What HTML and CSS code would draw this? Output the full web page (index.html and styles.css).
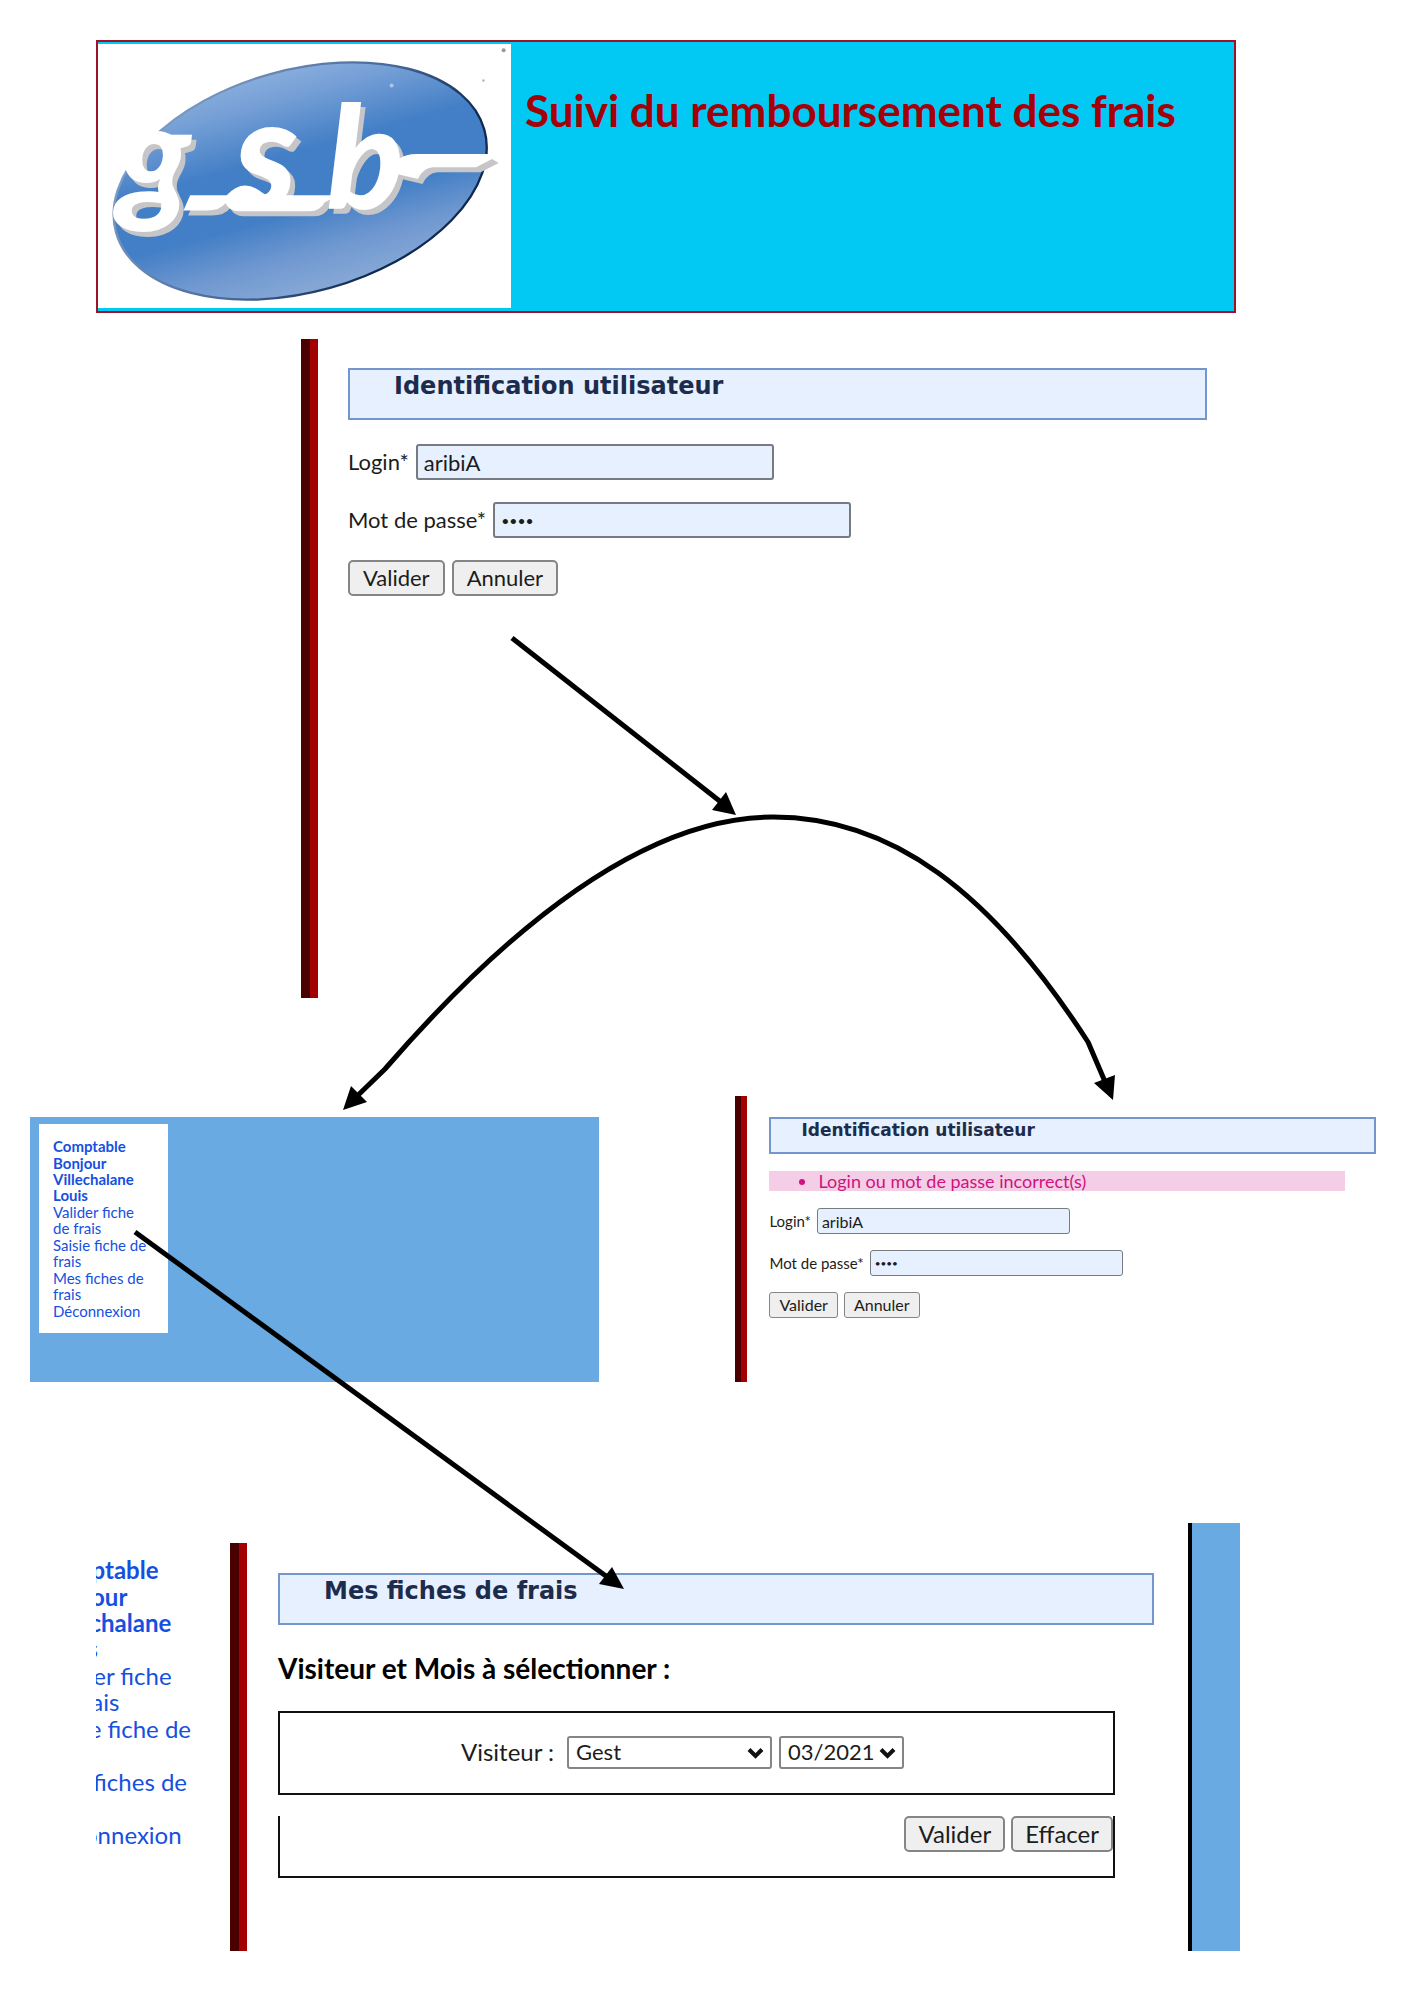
FILE: index.html
```html
<!DOCTYPE html>
<html lang="fr">
<head>
<meta charset="utf-8">
<title>Suivi du remboursement des frais</title>
<link rel="stylesheet" href="styles.css">
</head>
<body>
<div class="page">
  <header class="banner">
    <svg class="logo" viewBox="54 69 1240 794" role="img" aria-label="Logo gsb">
      <defs>
        <linearGradient id="oval" x1="0" y1="120" x2="0" y2="842" gradientUnits="userSpaceOnUse">
          <stop offset="0" stop-color="#8db1de"/>
          <stop offset="0.15" stop-color="#759fd6"/>
          <stop offset="0.38" stop-color="#437fc6"/>
          <stop offset="0.62" stop-color="#437fc6"/>
          <stop offset="0.8" stop-color="#7098d0"/>
          <stop offset="1" stop-color="#8cacd8"/>
        </linearGradient>
        <linearGradient id="edge" x1="300" y1="200" x2="800" y2="800" gradientUnits="userSpaceOnUse">
          <stop offset="0" stop-color="#7f9cc2"/>
          <stop offset="0.6" stop-color="#47699c"/>
          <stop offset="1" stop-color="#10294f"/>
        </linearGradient>
        <g id="lettering">
          <text class="logo-letter" x="112" y="556">g</text>
          <text class="logo-letter logo-letter-tall" x="462" y="566">s</text>
          <text class="logo-letter" x="740" y="566">b</text>
          <path d="M330 524H440Q490 470 545 515L560 524H780L735 545Q720 572 690 572H475Q450 572 436 548Q420 570 380 570H310Z"/>
          <path d="M930 455Q950 400 1010 400H1224L1244 412L1190 440H1060Q1030 442 1015 475Z"/>
        </g>
      </defs>
      <ellipse cx="661" cy="481" rx="575" ry="334" transform="rotate(-15.6 661 481)" fill="url(#oval)" stroke="url(#edge)" stroke-width="7"/>
      <use href="#lettering" x="14" y="15" fill="#c6c6c8"/>
      <use href="#lettering" fill="#fff"/>
      <circle cx="1273" cy="88" r="6" fill="#999"/>
      <circle cx="1212" cy="179" r="4" fill="#bbb"/>
      <circle cx="936" cy="194" r="6" fill="#a9c8e8"/>
    </svg>
    <h1 class="banner-title">Suivi du remboursement des frais</h1>
  </header>

  <section class="frame login">
    <h2 class="heading">Identification utilisateur</h2>
    <form class="form">
      <div class="row"><label for="login">Login*</label><input class="field" id="login" type="text" value="aribiA"></div>
      <div class="row"><label for="pass">Mot de passe*</label><input class="field" id="pass" type="password" value="aaaa"></div>
      <div class="row"><button class="btn" type="button">Valider</button><button class="btn" type="button">Annuler</button></div>
    </form>
  </section>

  <div class="results">
    <section class="home">
      <ul class="menu">
        <li><strong>Comptable</strong></li>
        <li><strong>Bonjour<br>Villechalane<br>Louis</strong></li>
        <li><a href="#valider">Valider fiche<br>de frais</a></li>
        <li><a href="#saisie">Saisie fiche de<br>frais</a></li>
        <li><a href="#fiches">Mes fiches de<br>frais</a></li>
        <li><a href="#sortie">Déconnexion</a></li>
      </ul>
    </section>
    <section class="frame retry">
      <h2 class="heading">Identification utilisateur</h2>
      <ul class="error"><li>Login ou mot de passe incorrect(s)</li></ul>
      <form class="form">
        <div class="row"><label for="login2">Login*</label><input class="field" id="login2" type="text" value="aribiA"></div>
        <div class="row"><label for="pass2">Mot de passe*</label><input class="field" id="pass2" type="password" value="aaaa"></div>
        <div class="row"><button class="btn" type="button">Valider</button><button class="btn" type="button">Annuler</button></div>
      </form>
    </section>
  </div>

  <div class="sheets">
    <nav class="side">
      <ul class="menu menu-large">
        <li><strong>Comptable</strong></li>
        <li><strong>Bonjour<br>Villechalane<br>Louis</strong></li>
        <li><a href="#valider">Valider fiche<br>de frais</a></li>
        <li><a href="#saisie">Saisie fiche de<br>frais</a></li>
        <li><a href="#fiches">Mes fiches de<br>frais</a></li>
        <li><a href="#sortie">Déconnexion</a></li>
      </ul>
    </nav>
    <section class="frame fiches">
      <h2 class="heading">Mes fiches de frais</h2>
      <h3 class="subheading">Visiteur et Mois à sélectionner :</h3>
      <form class="selection">
        <div class="criteria">
          <label for="visiteur">Visiteur :</label>
          <span class="select select-wide">
            <select id="visiteur"><option>Gest</option></select>
            <svg class="chevron" viewBox="0 0 17 12"><path d="M2 2.500L8.500 9L15 2.500"/></svg>
          </span>
          <span class="select">
            <select id="mois" aria-label="Mois"><option>03/2021</option></select>
            <svg class="chevron" viewBox="0 0 17 12"><path d="M2 2.500L8.500 9L15 2.500"/></svg>
          </span>
        </div>
        <div class="actions"><button class="btn" type="button">Valider</button><button class="btn" type="button">Effacer</button></div>
      </form>
    </section>
    <div class="rail"></div>
  </div>

  <svg class="arrows" viewBox="0 0 1413 2000" preserveAspectRatio="none" aria-hidden="true">
    <path class="line" d="M512 638L726 806"/>
    <path d="M736 815L726 792L712 810Z"/>
    <path class="line" d="M352 1101L385 1069C510 925 645 817 773 817C890 817 990 890 1088 1042L1106 1084"/>
    <path d="M343 1110L351 1086L367 1102Z"/>
    <path d="M1113 1100L1094 1083L1115 1075Z"/>
    <path class="line" d="M135 1232L610 1579"/>
    <path d="M624 1589L612 1567L599 1584Z"/>
  </svg>
</div>
</body>
</html>
```
FILE: styles.css
```css
* { box-sizing: border-box; }

body {
  margin: 0;
  background: #fff;
  color: #1c1c1c;
  font-family: Lato, "Liberation Sans", sans-serif;
  font-size: 22px;
  line-height: 28px;
}

h1, h2, h3, ul { margin: 0; padding: 0; }
ul { list-style: none; }

.page {
  position: relative;
  padding: 40px 0 49px;
}

.banner {
  display: flex;
  gap: 14px;
  margin: 0 177px 26px 96px;
  padding: 2px 0 3px;
  border: 2px solid #9c1428;
  background: #02c9f3;
}
.logo {
  flex: none;
  width: 413px;
  height: 264px;
  background: #fff;
}
.logo-letter {
  font-family: Lato, sans-serif;
  font-size: 430px;
  font-style: italic;
  font-weight: 900;
}
.logo-letter-tall { font-size: 470px; }
.banner-title {
  padding-top: 40px;
  color: #a40008;
  font-size: 44px;
  line-height: 52px;
  font-weight: 700;
}

/* Framed page excerpts with the two-tone vertical bar */
.frame {
  border-left: 9px solid #4a0000;
  box-shadow: inset 8px 0 #a30000;
}
.heading {
  height: 52px;
  padding-left: 44px;
  border: 2px solid #7397cd;
  background: #e6f0fe;
  color: #1d2c4c;
  font-family: "DejaVu Sans", sans-serif;
  font-size: 24px;
  line-height: 32px;
}
.form {
  display: flex;
  flex-direction: column;
  gap: 22px;
}
.row {
  display: flex;
  align-items: center;
  gap: 7px;
}
.field, .btn, .select select {
  margin: 0;
  font: inherit;
  color: inherit;
}
.field {
  width: 358px;
  height: 36px;
  padding: 0 6px;
  border: 2px solid #767a82;
  border-radius: 3px;
  background: #e6f0fe;
}
.field[type="password"] { font-size: 14px; }
.btn {
  height: 36px;
  padding: 0 13px;
  border: 2px solid #858585;
  border-radius: 5px;
  background: #efefef;
}

.login {
  min-height: 659px;
  margin: 0 206px 98px 301px;
  padding: 29px 0 0 38px;
}
.login .form { margin-top: 24px; }

.results {
  display: grid;
  grid-template-columns: 569fr 137fr 641fr;
  margin: 0 37px 141px 30px;
}
.home {
  margin-top: 21px;
  padding: 7px 9px 49px;
  background: #6aaae2;
}
.menu {
  display: flex;
  flex-direction: column;
  gap: 1px;
  width: 129px;
  padding: 14px 0 14px 14px;
  background: #fff;
  color: #1650e0;
  font-size: 15px;
  line-height: 16px;
  white-space: nowrap;
}
.menu a {
  color: inherit;
  text-decoration: none;
}
.retry {
  grid-column: 3;
  min-height: 286px;
  padding: 21px 0 0 28px;
  border-left-width: 6px;
  box-shadow: inset 6px 0 #a30000;
  font-size: 16px;
  line-height: 20px;
}
.retry .heading {
  height: 37px;
  padding-left: 30px;
  font-size: 17px;
  line-height: 22px;
}
.retry .form {
  gap: 16px;
  margin-top: 17px;
}
.retry .row { gap: 6px; }
.retry label { font-size: 15px; }
.retry .field {
  width: 253px;
  height: 26px;
  padding: 0 4px;
  border-width: 1px;
}
.retry .field[type="password"] { font-size: 10px; }
.retry .btn {
  height: 26px;
  padding: 0 9px;
  border-width: 1px;
  border-radius: 3px;
}
.error {
  margin: 17px 31px 0 0;
  padding-left: 49px;
  background: #f4cee6;
  color: #d0127e;
  font-size: 18px;
  list-style: disc;
}

.sheets {
  display: grid;
  grid-template-columns: 134px 1fr 52px;
  margin: 0 173px 0 96px;
}
.side {
  overflow: hidden;
  padding-top: 34px;
}
.menu-large {
  width: auto;
  margin-left: -54px;
  padding: 0;
  font-size: 24px;
  line-height: 26px;
}
.fiches {
  min-height: 408px;
  margin-top: 20px;
  padding: 30px 34px 0 39px;
}
.subheading {
  margin: 28px 0;
  color: #000;
  font-size: 28px;
  line-height: 30px;
}
.selection { margin-right: 39px; }
.criteria {
  display: flex;
  align-items: center;
  justify-content: center;
  gap: 7px;
  height: 84px;
  margin-bottom: 21px;
  padding: 0 28px 2px 0;
  border: 2px solid #111;
}
.criteria label {
  margin-right: 6px;
  font-size: 24px;
}
.select {
  position: relative;
  width: 125px;
}
.select-wide { width: 205px; }
.select select {
  display: block;
  width: 100%;
  height: 33px;
  padding: 0 7px;
  border: 2px solid #858585;
  border-radius: 3px;
  background: #fff;
  appearance: none;
}
.chevron {
  position: absolute;
  top: 11px;
  right: 8px;
  width: 17px;
  height: 12px;
  fill: none;
  stroke: #111;
  stroke-width: 4;
  pointer-events: none;
}
.actions {
  display: flex;
  justify-content: flex-end;
  gap: 6px;
  height: 62px;
  border: 2px solid #111;
  border-top: 0;
  font-size: 24px;
}
.actions .btn { padding: 0 12px; }
.rail {
  border-left: 4px solid #000;
  background: #6aaae2;
}

.arrows {
  position: absolute;
  inset: 0;
  width: 100%;
  height: 100%;
  pointer-events: none;
}
.line {
  fill: none;
  stroke: #000;
  stroke-width: 5;
}
```
